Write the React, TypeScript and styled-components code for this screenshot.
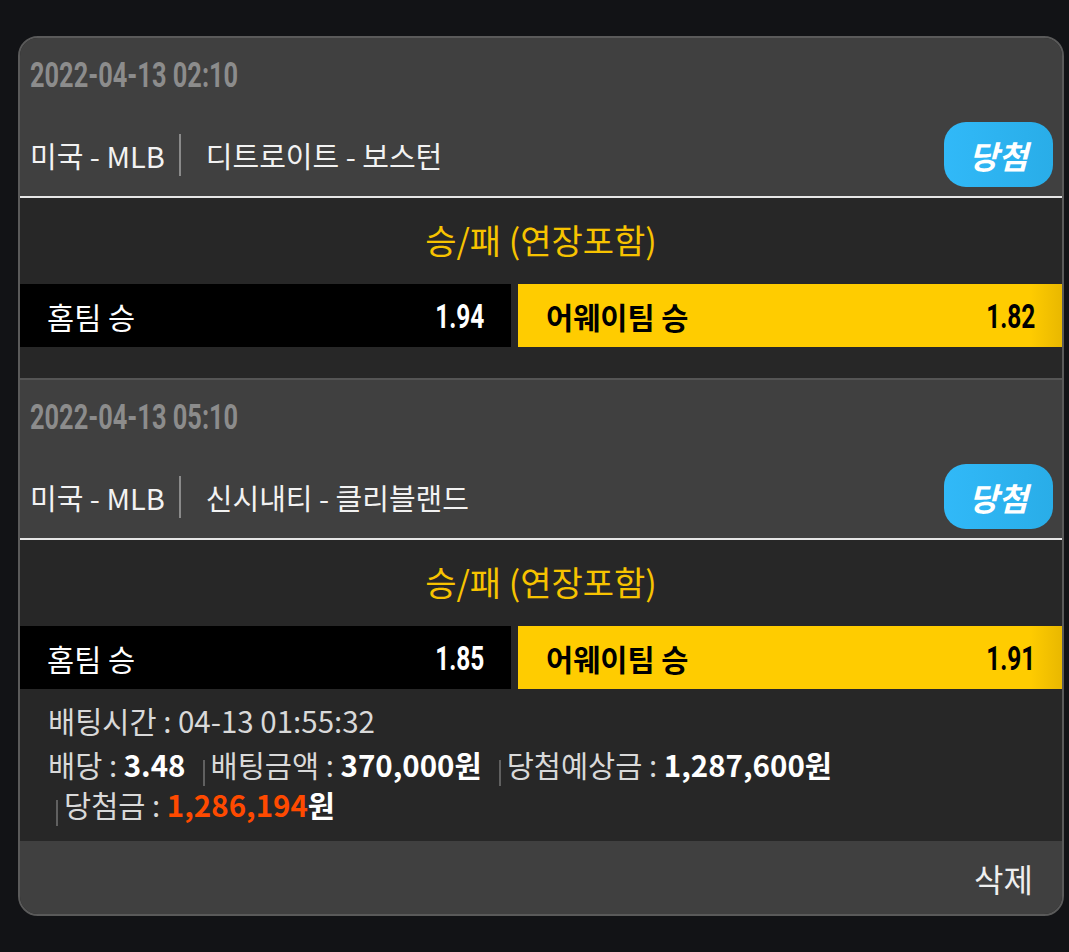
import React from "react";
import styled, { createGlobalStyle } from "styled-components";

const Global = createGlobalStyle`
  html, body { margin: 0; padding: 0; background: #121316; }
  body { font-family: "Noto Sans CJK KR", "Noto Sans", sans-serif; }
  * { box-sizing: border-box; }
`;

const Page = styled.div`
  padding: 36px 0 36px 18px;
`;

const Card = styled.div`
  width: 1046px;
  border: 2px solid #5a5a5a;
  border-radius: 20px;
  overflow: hidden;
  background: #272727;
`;

const Event = styled.section<{ $spaced?: boolean; $divider?: boolean }>`
  padding-bottom: ${(p) => (p.$spaced ? "31px" : "0")};
  border-top: ${(p) => (p.$divider ? "2px solid #555" : "none")};
`;

const Header = styled.header`
  background: #404040;
  padding: 0 9px 9px 10px;
  border-bottom: 2px solid #e6e6e6;
`;

const DateRow = styled.div`
  height: 74px;
  margin-bottom: 10px;
  display: flex;
  align-items: center;
`;

const Condensed = styled.span<{ $origin: "left" | "right" }>`
  display: inline-block;
  font-family: Roboto, "Liberation Sans", sans-serif;
  font-weight: 700;
  transform: scaleX(0.72);
  transform-origin: ${(p) => p.$origin} center;
  white-space: nowrap;
`;

const DateText = styled(Condensed)`
  font-size: 35px;
  color: #8c8c8c;
  transform: scaleX(0.725);
`;

const LeagueRow = styled.div`
  height: 65px;
  display: flex;
  align-items: center;
  color: #f2f2f2;
  font-size: 29px;
`;

const League = styled.span`
  padding-right: 14px;
`;

const VBar = styled.span`
  width: 2px;
  height: 42px;
  background: #8a8a8a;
`;

const Teams = styled.span`
  padding-left: 25px;
  flex: 1;
`;

const WinBadge = styled.span`
  width: 109px;
  height: 65px;
  border-radius: 22px;
  background: linear-gradient(to right, #31b9f8, #29ade8);
  color: #fff;
  font-size: 32px;
  font-weight: 700;
  font-style: italic;
  display: flex;
  align-items: center;
  justify-content: center;
`;

const MarketTitle = styled.div`
  height: 86px;
  display: flex;
  align-items: center;
  justify-content: center;
  color: #f7c300;
  font-size: 34px;
  padding-bottom: 3px;
`;

const OddsRow = styled.div`
  display: grid;
  grid-template-columns: 491px 1fr;
  column-gap: 7px;
  height: 63px;
`;

const Pick = styled.div<{ $selected?: boolean }>`
  display: flex;
  align-items: center;
  justify-content: space-between;
  padding: 0 27px 0 ${(p) => (p.$selected ? "28px" : "27px")};
  background: ${(p) =>
    p.$selected
      ? "linear-gradient(to right, #ffcc00 0%, #ffcc00 94%, #e9b800 100%)"
      : "#000"};
  color: ${(p) => (p.$selected ? "#000" : "#fff")};
  font-size: 29.5px;
  font-weight: ${(p) => (p.$selected ? 700 : 400)};
`;

const Odds = styled(Condensed)`
  font-size: 34px;
`;

const Info = styled.div`
  padding: 11px 20px 17px 28px;
  color: #d9d9d9;
  font-size: 29.5px;
`;

const InfoLine = styled.div`
  line-height: 40px;
  height: 40px;
  margin-bottom: 4px;
`;

const Fields = styled.div`
  line-height: 40px;
`;

const Field = styled.span`
  display: inline-block;
  vertical-align: top;
  height: 40px;
  white-space: nowrap;
  margin-right: 9px;
`;

const Sep = styled.span`
  display: inline-block;
  width: 2px;
  height: 26px;
  background: #606060;
  margin: 0 6px 0 8px;
  vertical-align: -9px;
`;

const Value = styled.b<{ $accent?: boolean }>`
  font-weight: 700;
  color: ${(p) => (p.$accent ? "#ff4a00" : "#fff")};
`;

const Footer = styled.footer`
  background: #404040;
  height: 73px;
  display: flex;
  align-items: center;
  justify-content: flex-end;
  padding-right: 29px;
  color: #efefef;
  font-size: 32px;
`;

type Game = {
  date: string;
  teams: string;
  home: string;
  away: string;
};

const games: Game[] = [
  { date: "2022-04-13 02:10", teams: "디트로이트 - 보스턴", home: "1.94", away: "1.82" },
  { date: "2022-04-13 05:10", teams: "신시내티 - 클리블랜드", home: "1.85", away: "1.91" },
];

export default function App() {
  return (
    <Page>
      <Global />
      <Card>
        {games.map((g, i) => (
          <Event key={g.date} $spaced={i < games.length - 1} $divider={i > 0}>
            <Header>
              <DateRow>
                <DateText $origin="left">{g.date}</DateText>
              </DateRow>
              <LeagueRow>
                <League>미국 - MLB</League>
                <VBar />
                <Teams>{g.teams}</Teams>
                <WinBadge>당첨</WinBadge>
              </LeagueRow>
            </Header>
            <MarketTitle>승/패 (연장포함)</MarketTitle>
            <OddsRow>
              <Pick>
                <span>홈팀 승</span>
                <Odds $origin="right">{g.home}</Odds>
              </Pick>
              <Pick $selected>
                <span>어웨이팀 승</span>
                <Odds $origin="right">{g.away}</Odds>
              </Pick>
            </OddsRow>
          </Event>
        ))}
        <Info>
          <InfoLine>배팅시간 : 04-13 01:55:32</InfoLine>
          <Fields>
            <Field>
              배당 : <Value>3.48</Value>
            </Field>
            <Field>
              <Sep />배팅금액 : <Value>370,000원</Value>
            </Field>
            <Field>
              <Sep />당첨예상금 : <Value>1,287,600원</Value>
            </Field>
            <Field>
              <Sep />당첨금 : <Value $accent>1,286,194</Value>
              <Value>원</Value>
            </Field>
          </Fields>
        </Info>
        <Footer>삭제</Footer>
      </Card>
    </Page>
  );
}
